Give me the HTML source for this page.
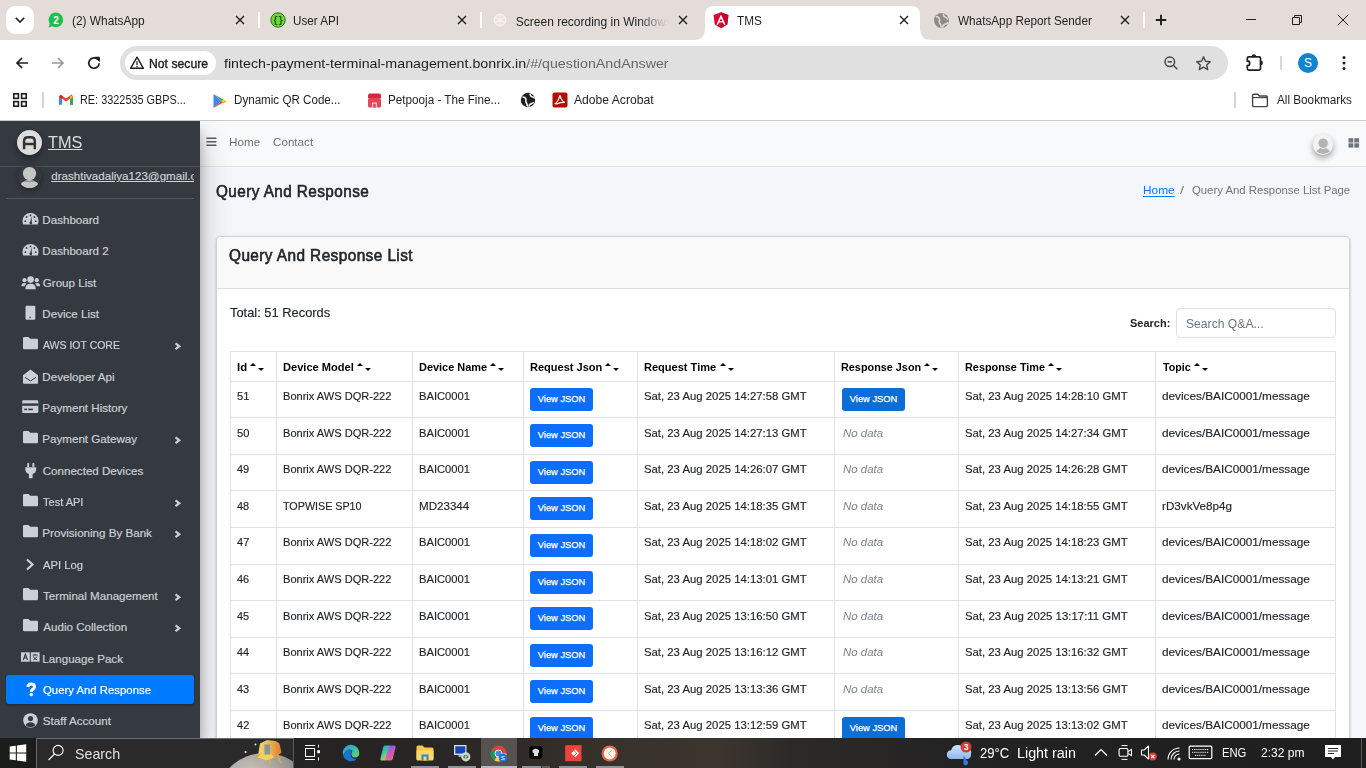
<!DOCTYPE html><html><head><meta charset="utf-8"><title>TMS</title><style>*{box-sizing:border-box;margin:0;padding:0}
html,body{width:1366px;height:768px;overflow:hidden;background:#fff;font-family:"Liberation Sans",sans-serif;position:relative}
.a{position:absolute}
svg.a{overflow:visible}
.t{position:absolute;white-space:nowrap;line-height:1}
.cell{color:#212529;-webkit-text-stroke:.15px #212529}
.th{color:#000;font-weight:bold}
.sort{display:inline-block;position:relative;width:15px;height:10px;margin-left:3.6px}
.sort .up{position:absolute;left:0;top:2.4px;width:0;height:0;border-left:3.3px solid transparent;border-right:3.3px solid transparent;border-bottom:3.2px solid #000}
.sort .dn{position:absolute;left:8px;top:7.4px;width:0;height:0;border-left:3.1px solid transparent;border-right:3.1px solid transparent;border-top:3px solid #000}
.btn{position:absolute;height:23px;width:63px;background:#0d6efd;border-radius:3px;color:#fff;font-size:9.3px;line-height:23px;text-align:center;font-family:"Liberation Sans",sans-serif;-webkit-text-stroke:.25px #fff}
.btn.b2{background:#0b6dd6}
.nod{color:#7d8388;font-style:italic}
.nav{color:#c2c7d0}
</style></head><body>
<div class="a" style="left:0px;top:0px;width:1366px;height:40px;background:#e3dcd9"></div>
<div class="a" style="left:6px;top:6px;width:28px;height:28px;background:#fff;border-radius:9px"></div>
<svg class="a" style="left:0px;top:0px;" width="40" height="40" viewBox="0 0 40 40"><polyline points="15.8,17.8 20,22 24.2,17.8" fill="none" stroke="#1f1f1f" stroke-width="1.6"/></svg>
<svg class="a" style="left:48px;top:12px;" width="16" height="16" viewBox="0 0 16 16"><path d="M8 0.6a7.3 7.3 0 1 1-3.6 13.7L0.6 15.4l1.2-3.6A7.3 7.3 0 0 1 8 0.6z" fill="#1fbf4f"/><text x="8" y="11.6" text-anchor="middle" font-size="10" font-weight="bold" fill="#fff" font-family="Liberation Sans">2</text></svg>
<div class="t " style="left:71.80px;top:15.00px;font-size:12px;transform-origin:0 0;transform:scaleX(0.9905);color:#1f1f1f">(2) WhatsApp</div>
<svg class="a" style="left:232px;top:12px;" width="16" height="16" viewBox="0 0 16 16"><path d="M4 4L12 12M12 4L4 12" stroke="#1f1f1f" stroke-width="1.4"/></svg>
<div class="a" style="left:258px;top:12px;width:2px;height:16px;background:#fff;border-radius:1px"></div>
<svg class="a" style="left:270px;top:12px;" width="16" height="16" viewBox="0 0 16 16"><circle cx="8" cy="8" r="7.2" fill="#6cd73a" stroke="#2f6e18" stroke-width="1"/><text x="8" y="11.4" text-anchor="middle" font-size="8.5" font-weight="bold" fill="#1f4a10" font-family="Liberation Mono">{}</text></svg>
<div class="t " style="left:293.34px;top:15.00px;font-size:12px;transform-origin:0 0;transform:scaleX(0.9697);color:#1f1f1f">User API</div>
<svg class="a" style="left:454px;top:12px;" width="16" height="16" viewBox="0 0 16 16"><path d="M4 4L12 12M12 4L4 12" stroke="#1f1f1f" stroke-width="1.4"/></svg>
<div class="a" style="left:480px;top:12px;width:2px;height:16px;background:#fff;border-radius:1px"></div>
<svg class="a" style="left:492px;top:12px;" width="16" height="16" viewBox="0 0 16 16"><g fill="none" stroke="#f4f1f0" stroke-width="1.6"><circle cx="8" cy="8" r="5.6"/><path d="M8 2.4v6.4M3.2 5.2l5.6 3.2M12.8 5.2l-5.6 3.2M3.2 10.8L8 8M12.8 10.8L8 8M8 13.6V8"/></g></svg>
<div class="t" style="left:515.8px;top:14px;font-size:12px;color:#1f1f1f;width:152px;height:18px;overflow:hidden;-webkit-mask-image:linear-gradient(90deg,#000 80%,transparent 100%)"><div style="line-height:1;padding-top:2px;transform-origin:0 0;transform:scaleX(1.0)">Screen recording in Windows 11</div></div>
<svg class="a" style="left:675px;top:12px;" width="16" height="16" viewBox="0 0 16 16"><path d="M4 4L12 12M12 4L4 12" stroke="#1f1f1f" stroke-width="1.4"/></svg>
<svg class="a" style="left:694px;top:6px" width="244" height="34" viewBox="0 0 244 34"><path d="M0 34 Q10 34 11 24 L11 9 Q11 0 20 0 L217 0 Q226 0 226 9 L226 24 Q227 34 237 34 Z" fill="#fff"/></svg>
<svg class="a" style="left:713px;top:12px;" width="16" height="17" viewBox="0 0 16 17"><path d="M8 0.3L15.4 2.9 14.3 12.6 8 16.3 1.7 12.6 0.6 2.9Z" fill="#dd0031"/><path d="M8 0.3V16.3L14.3 12.6 15.4 2.9Z" fill="#c3002f"/><path d="M8 2.6L3.4 12.8h1.7l0.9-2.3h4l0.9 2.3h1.7ZM8 6.2l1.3 3H6.7Z" fill="#fff"/></svg>
<div class="t " style="left:736.97px;top:15.00px;font-size:12px;transform-origin:0 0;transform:scaleX(0.9771);color:#1f1f1f">TMS</div>
<svg class="a" style="left:896px;top:12px;" width="16" height="16" viewBox="0 0 16 16"><path d="M4 4L12 12M12 4L4 12" stroke="#1f1f1f" stroke-width="1.4"/></svg>
<svg class="a" style="left:933px;top:12px;" width="17" height="17" viewBox="0 0 17 17"><circle cx="8.5" cy="8.5" r="7.5" fill="#8e8b8a"/><path d="M3 4.5c2 0 3 1 3.5 2.5s-1 2.5 0 4 2 2 1.5 4.5M11 1.6c-1 1.5-.5 3 1 3.5s2.5 1 3.2 2.5M9.5 15.8c0-2 1-3 2.5-3.5s2.5-1 3-2" fill="none" stroke="#dcd8d6" stroke-width="1.6"/></svg>
<div class="t " style="left:958.35px;top:15.00px;font-size:12px;transform-origin:0 0;transform:scaleX(0.9788);color:#1f1f1f">WhatsApp Report Sender</div>
<svg class="a" style="left:1117px;top:12px;" width="16" height="16" viewBox="0 0 16 16"><path d="M4 4L12 12M12 4L4 12" stroke="#1f1f1f" stroke-width="1.4"/></svg>
<div class="a" style="left:1143px;top:12px;width:2px;height:16px;background:#fff;border-radius:1px"></div>
<svg class="a" style="left:1153px;top:12px;" width="16" height="16" viewBox="0 0 16 16"><path d="M8 2.8v10.4M2.8 8h10.4" stroke="#1f1f1f" stroke-width="1.9"/></svg>
<div class="a" style="left:1246px;top:19px;width:10px;height:1px;background:#1f1f1f"></div>
<svg class="a" style="left:1290px;top:13px;" width="14" height="14" viewBox="0 0 14 14"><path d="M2.5 4.5h7v7h-7z" fill="none" stroke="#1f1f1f" stroke-width="1"/><path d="M4.5 4.5v-2h7v7h-2" fill="none" stroke="#1f1f1f" stroke-width="1"/></svg>
<svg class="a" style="left:1335px;top:12px;" width="16" height="16" viewBox="0 0 16 16"><path d="M2.8 2.8L13.2 13.2M13.2 2.8L2.8 13.2" stroke="#1f1f1f" stroke-width="1"/></svg>
<div class="a" style="left:0px;top:40px;width:1366px;height:80px;background:#fff;border-radius:8px 8px 0 0"></div>
<svg class="a" style="left:14px;top:55px;" width="16" height="16" viewBox="0 0 16 16"><path d="M14 8H3M8 3L3 8l5 5" fill="none" stroke="#1f1f1f" stroke-width="1.7"/></svg>
<svg class="a" style="left:50px;top:55px;" width="16" height="16" viewBox="0 0 16 16"><path d="M2 8h11M8 3l5 5-5 5" fill="none" stroke="#9a9a9a" stroke-width="1.7"/></svg>
<svg class="a" style="left:86px;top:55px;" width="16" height="16" viewBox="0 0 16 16"><path d="M13.2 8.3A5.2 5.2 0 1 1 11.6 4.3" fill="none" stroke="#1f1f1f" stroke-width="1.7"/><path d="M9.2 2.2h4.2v4.2z" fill="#1f1f1f" stroke="#1f1f1f" stroke-width="1"/></svg>
<div class="a" style="left:120px;top:46px;width:1108px;height:34px;background:#e0e0e0;border-radius:17px"></div>
<div class="a" style="left:125px;top:51px;width:91px;height:24px;background:#fff;border-radius:12px"></div>
<svg class="a" style="left:129px;top:55px;" width="16" height="16" viewBox="0 0 16 16"><path d="M8 2.2L14.4 13.3H1.6Z" fill="none" stroke="#1f1f1f" stroke-width="1.4" stroke-linejoin="round"/><path d="M8 6.3v3.6" stroke="#1f1f1f" stroke-width="1.3"/><circle cx="8" cy="11.5" r=".8" fill="#1f1f1f"/></svg>
<div class="t " style="left:148.70px;top:57.00px;font-size:13px;transform-origin:0 0;transform:scaleX(0.9389);color:#1f1f1f;-webkit-text-stroke:.4px #1f1f1f">Not secure</div>
<div class="t " style="left:224.43px;top:57.00px;font-size:13.6px;transform-origin:0 0;transform:scaleX(1.0470);color:#1f1f1f">fintech-payment-terminal-management.bonrix.in<span style="color:#676767">/#/questionAndAnswer</span></div>
<svg class="a" style="left:1163px;top:55px;" width="16" height="16" viewBox="0 0 16 16"><circle cx="6.8" cy="6.8" r="4.8" fill="none" stroke="#474747" stroke-width="1.5"/><path d="M4.6 6.8h4.4M10.3 10.3l4 4" stroke="#474747" stroke-width="1.5"/></svg>
<svg class="a" style="left:1195px;top:55px;" width="17" height="17" viewBox="0 0 17 17"><path d="M8.5 1.8l2 4.4 4.8.5-3.6 3.2 1 4.7-4.2-2.4-4.2 2.4 1-4.7-3.6-3.2 4.8-.5z" fill="none" stroke="#474747" stroke-width="1.4" stroke-linejoin="round"/></svg>
<svg class="a" style="left:1244px;top:52px;" width="21" height="21" viewBox="0 0 21 21"><path d="M4.8 4.8H15q1.5 0 1.5 1.5v10.3q0 1.5-1.5 1.5H4.8q-1.5 0-1.5-1.5v-2.9a2.4 2.4 0 0 0 0-4.8V6.3q0-1.5 1.5-1.5z" fill="none" stroke="#1f1f1f" stroke-width="1.7"/><path d="M7.6 4.6a2.3 2.3 0 0 1 4.6 0z" fill="#1f1f1f"/><path d="M16.6 8.6a2.3 2.3 0 0 1 0 4.6z" fill="#1f1f1f"/></svg>
<div class="a" style="left:1280px;top:56px;width:1.5px;height:14px;background:#e0d5d3"></div>
<div class="t" style="left:1298px;top:53px;width:20px;height:20px;border-radius:50%;background:#0f85cf;color:#fff;font-size:12px;line-height:20px;text-align:center">S</div>
<svg class="a" style="left:1336px;top:55px;" width="16" height="16" viewBox="0 0 16 16"><circle cx="8" cy="2.6" r="1.5" fill="#1f1f1f"/><circle cx="8" cy="8" r="1.5" fill="#1f1f1f"/><circle cx="8" cy="13.4" r="1.5" fill="#1f1f1f"/></svg>
<svg class="a" style="left:12px;top:92px;" width="16" height="16" viewBox="0 0 16 16"><g fill="none" stroke="#1f1f1f" stroke-width="1.6"><rect x="1.8" y="1.8" width="4.6" height="4.6"/><rect x="9.6" y="1.8" width="4.6" height="4.6"/><rect x="1.8" y="9.6" width="4.6" height="4.6"/><rect x="9.6" y="9.6" width="4.6" height="4.6"/></g></svg>
<div class="a" style="left:42px;top:92px;width:1.5px;height:16px;background:#d6d3d2"></div>
<svg class="a" style="left:58px;top:93px;" width="16" height="13" viewBox="0 0 16 13"><path d="M1 3.5v8.2h3V6.2z" fill="#4285f4"/><path d="M15 3.5v8.2h-3V6.2z" fill="#34a853"/><path d="M1 3.5L8 8.5 15 3.5 13.6 1.6 8 5.6 2.4 1.6z" fill="#ea4335"/><path d="M12 6.2V11.7h3V3.5z" fill="#34a853"/><path d="M15 3.5l-3 2.7V2.2z" fill="#fbbc04"/><path d="M1 3.5l3 2.7V2.2z" fill="#c5221f"/></svg>
<div class="t " style="left:79.51px;top:94.00px;font-size:12px;transform-origin:0 0;transform:scaleX(0.9071);color:#1f1f1f">RE: 3322535 GBPS...</div>
<svg class="a" style="left:212px;top:93px;" width="16" height="16" viewBox="0 0 16 16"><path d="M1.5 1l7.6 7-7.6 7z" fill="#4285f4"/><path d="M1.5 1l10 5.7-2.4 1.3z" fill="#34a853"/><path d="M1.5 15l10-5.7-2.4-1.3z" fill="#ea4335"/><path d="M11.5 6.7L15 8.4l-3.5 2z" fill="#fbbc04"/><path d="M9.1 8l2.4-1.3v3.6z" fill="#fbbc04"/></svg>
<div class="t " style="left:233.55px;top:94.00px;font-size:12px;transform-origin:0 0;transform:scaleX(0.9680);color:#1f1f1f">Dynamic QR Code...</div>
<svg class="a" style="left:366px;top:92px;" width="17" height="17" viewBox="0 0 17 17"><path d="M2 3.5q0-2 2-2h9q2 0 2 2v2.5H2z" fill="#d3263b"/><rect x="2" y="6" width="13" height="9.5" rx="1.5" fill="#e2485a"/><path d="M6 15.5v-5h5v5" fill="#f5c9cf"/><path d="M7.2 15.5v-3.8h2.6v3.8" fill="#e2485a"/></svg>
<div class="t " style="left:387.84px;top:94.00px;font-size:12px;transform-origin:0 0;transform:scaleX(0.9743);color:#1f1f1f">Petpooja - The Fine...</div>
<svg class="a" style="left:520px;top:92px;" width="16" height="16" viewBox="0 0 16 16"><circle cx="8" cy="8" r="7.2" fill="#1f1f1f"/><path d="M2.5 5c2 0 3 .7 3.4 2s-.6 2.3.2 3.5 1.6 1.8 1.2 4M10.5 1.4c-.8 1.4-.2 2.7 1.1 3s2.3.8 2.9 2M9 14.8c0-1.7.9-2.6 2.2-3s2.2-.9 2.7-1.8" fill="none" stroke="#fff" stroke-width="1.5"/></svg>
<svg class="a" style="left:552px;top:92px;" width="16" height="16" viewBox="0 0 16 16"><rect x="0.5" y="0.5" width="15" height="15" rx="2" fill="#b30b00"/><path d="M3.3 11.8c1.2-.8 2.4-2.6 3.4-4.8.6-1.4.8-3.5 1.3-3.5s.5 2 1.1 3.2c.9 1.7 2.4 3.2 3.7 3.7-1.8-.2-4.7.2-6.6 1-1 .4-2.1.8-2.9.4z" fill="none" stroke="#fff" stroke-width="1.2"/></svg>
<div class="t " style="left:574.20px;top:94.00px;font-size:12px;transform-origin:0 0;transform:scaleX(1.0107);color:#1f1f1f">Adobe Acrobat</div>
<div class="a" style="left:1234px;top:92px;width:1.5px;height:16px;background:#d6d3d2"></div>
<svg class="a" style="left:1251px;top:92px;" width="18" height="16" viewBox="0 0 18 16"><path d="M1.6 3.2q0-1 1-1h4.2l1.6 1.8h7q1 0 1 1v8.6q0 1-1 1H2.6q-1 0-1-1z" fill="none" stroke="#474747" stroke-width="1.4"/><path d="M1.6 5.6h14.8" stroke="#474747" stroke-width="1.2"/></svg>
<div class="t " style="left:1276.50px;top:94.00px;font-size:12px;transform-origin:0 0;transform:scaleX(0.9768);color:#1f1f1f">All Bookmarks</div>
<div class="a" style="left:0px;top:120px;width:1366px;height:1px;background:#c9c9c9"></div>
<div class="a" style="left:0px;top:121px;width:1366px;height:617px;background:#f4f6f9"></div>
<div class="a" style="left:200px;top:121px;width:1166px;height:45px;background:#f8f9fa"></div>
<div class="a" style="left:200px;top:166px;width:1166px;height:1px;background:#dee2e6"></div>
<div class="a" style="left:0px;top:121px;width:200px;height:617px;background:#343a40;box-shadow:0 14px 28px rgba(0,0,0,.25),0 10px 10px rgba(0,0,0,.22);clip-path:inset(0 -60px -60px 0)"></div>
<div class="a" style="left:17px;top:129.5px;width:25px;height:25px;border-radius:50%;background:#dcdcdc;box-shadow:0 3px 6px rgba(0,0,0,.16),0 3px 6px rgba(0,0,0,.23)"></div>
<svg class="a" style="left:17px;top:129.5px;" width="25" height="25" viewBox="0 0 25 25"><path d="M7.1 19.2V11.2q0-3.9 3.9-3.9h2.9q3.9 0 3.9 3.9v8M7.1 13.9h10.7" fill="none" stroke="#333" stroke-width="2.5"/></svg>
<div class="t " style="left:48.38px;top:134.00px;font-size:16.5px;transform-origin:0 0;transform:scaleX(0.9860);color:rgba(255,255,255,.82);text-decoration:underline;text-decoration-thickness:1px;text-underline-offset:1px">TMS</div>
<div class="a" style="left:0px;top:166px;width:200px;height:1px;background:#4b545c"></div>
<svg class="a" style="left:18px;top:164px;filter:drop-shadow(0 2px 3px rgba(0,0,0,.4))" width="23" height="25" viewBox="0 0 23 25"><defs><clipPath id="uc"><circle cx="11.5" cy="12.5" r="11.5"/></clipPath></defs><circle cx="11.5" cy="12.5" r="11.5" fill="#343a40"/><g clip-path="url(#uc)"><circle cx="11.5" cy="9.5" r="6.6" fill="#c6c6c6"/><ellipse cx="11.5" cy="24.5" rx="10.5" ry="8.5" fill="#c6c6c6"/><path d="M3 16.3q8.5 3 17 0" stroke="#343a40" stroke-width=".8" fill="none" opacity=".5"/></g></svg>
<div class="t" style="left:51.2px;top:169.3px;width:142.5px;height:16px;overflow:hidden;font-size:11.6px;line-height:14px;color:#d0d4da;-webkit-text-stroke:.15px #d0d4da;text-decoration:underline;text-underline-offset:1px">drashtivadaliya123@gmail.com</div>
<div class="a" style="left:6px;top:198px;width:188px;height:1px;background:#4f5962"></div>
<div class="a" style="left:6px;top:675px;width:188px;height:29px;background:#007bff;border-radius:3px;box-shadow:0 1px 3px rgba(0,0,0,.12),0 1px 2px rgba(0,0,0,.24)"></div>
<svg class="a" style="left:21.5px;top:212.0px;" width="17" height="13" viewBox="0 0 17 13"><path d="M8.5 1A8 8 0 0 0 .5 9q0 1.8.8 3.4h14.4q.8-1.6.8-3.4A8 8 0 0 0 8.5 1z" fill="#cbd0d7"/><g fill="#343a40"><circle cx="3.3" cy="9.2" r=".9"/><circle cx="4.6" cy="5" r=".9"/><circle cx="13.7" cy="9.2" r=".9"/><circle cx="12.4" cy="5" r=".9"/><circle cx="8.5" cy="3.4" r=".9"/><path d="M9.6 4.2L8.3 9.6a1.4 1.4 0 1 0 1.5.3z"/></g></svg>
<div class="t " style="left:42.35px;top:214.00px;font-size:11.6px;transform-origin:0 0;transform:scaleX(1.0000);color:#cbd0d7;-webkit-text-stroke:.2px #cbd0d7">Dashboard</div>
<svg class="a" style="left:21.5px;top:243.0px;" width="17" height="13" viewBox="0 0 17 13"><path d="M8.5 1A8 8 0 0 0 .5 9q0 1.8.8 3.4h14.4q.8-1.6.8-3.4A8 8 0 0 0 8.5 1z" fill="#cbd0d7"/><g fill="#343a40"><circle cx="3.3" cy="9.2" r=".9"/><circle cx="4.6" cy="5" r=".9"/><circle cx="13.7" cy="9.2" r=".9"/><circle cx="12.4" cy="5" r=".9"/><circle cx="8.5" cy="3.4" r=".9"/><path d="M9.6 4.2L8.3 9.6a1.4 1.4 0 1 0 1.5.3z"/></g></svg>
<div class="t " style="left:42.35px;top:245.00px;font-size:11.6px;transform-origin:0 0;transform:scaleX(1.0000);color:#cbd0d7;-webkit-text-stroke:.2px #cbd0d7">Dashboard 2</div>
<svg class="a" style="left:20.5px;top:275.5px;" width="19.5" height="13.5" viewBox="0 0 19.5 13.5"><g fill="#cbd0d7"><circle cx="9.6" cy="3.6" r="3.3"/><path d="M4.4 13.2q0-5.4 5.2-5.4t5.2 5.4z"/><circle cx="3.5" cy="4.2" r="2.1"/><circle cx="15.8" cy="4.2" r="2.1"/><path d="M.4 10.3q0-3.3 3.1-3.3 1.2 0 2 .5-1.5 1.1-1.9 2.8z"/><path d="M19.1 10.3q0-3.3-3.1-3.3-1.2 0-2 .5 1.5 1.1 1.9 2.8z"/></g></svg>
<div class="t " style="left:42.76px;top:277.00px;font-size:11.6px;transform-origin:0 0;transform:scaleX(1.0000);color:#cbd0d7;-webkit-text-stroke:.2px #cbd0d7">Group List</div>
<svg class="a" style="left:24.5px;top:305.0px;" width="11" height="15" viewBox="0 0 11 15"><rect x=".5" y=".7" width="9.8" height="14.1" rx="1.3" fill="#cbd0d7"/><rect x="4.3" y="11.6" width="1.6" height="1.6" fill="#5a6068"/></svg>
<div class="t " style="left:42.35px;top:308.00px;font-size:11.6px;transform-origin:0 0;transform:scaleX(1.0000);color:#cbd0d7;-webkit-text-stroke:.2px #cbd0d7">Device List</div>
<svg class="a" style="left:22.5px;top:337.0px;" width="15" height="12" viewBox="0 0 15 12"><path d="M0 1.2Q0 0 1.2 0h4.3l1.7 1.8h6.6q1.2 0 1.2 1.2v8q0 1.2-1.2 1.2H1.2Q0 12.2 0 11z" fill="#cbd0d7"/></svg>
<div class="t " style="left:43.30px;top:339.00px;font-size:11.6px;transform-origin:0 0;transform:scaleX(0.9050);color:#cbd0d7;-webkit-text-stroke:.2px #cbd0d7">AWS IOT CORE</div>
<svg class="a" style="left:172px;top:339.7px;" width="10" height="12" viewBox="0 0 10 12"><path d="M3.5 3.3L7.3 6.2 3.5 9.1" fill="none" stroke="#cbd0d7" stroke-width="2.2"/></svg>
<svg class="a" style="left:22.5px;top:368.5px;" width="15" height="15" viewBox="0 0 15 15"><path d="M0 6.2L7.5.5 15 6.2V14q0 .8-.8.8H.8Q0 14.8 0 14z" fill="#cbd0d7"/><path d="M2 8.3l5.5 3.7 5.5-3.7" fill="none" stroke="#343a40" stroke-width="1"/></svg>
<div class="t " style="left:42.35px;top:371.00px;font-size:11.6px;transform-origin:0 0;transform:scaleX(1.0000);color:#cbd0d7;-webkit-text-stroke:.2px #cbd0d7">Developer Api</div>
<svg class="a" style="left:21.7px;top:400.0px;" width="16.5" height="13" viewBox="0 0 16.5 13"><rect x=".2" y=".2" width="16.1" height="12.8" rx="1.2" fill="#cbd0d7"/><rect x=".2" y="3.4" width="16.1" height="2.4" fill="#343a40"/><rect x="2.2" y="8.6" width="3" height="1.6" fill="#343a40"/><rect x="6.3" y="8.6" width="4.6" height="1.6" fill="#343a40"/></svg>
<div class="t " style="left:42.35px;top:402.00px;font-size:11.6px;transform-origin:0 0;transform:scaleX(1.0000);color:#cbd0d7;-webkit-text-stroke:.2px #cbd0d7">Payment History</div>
<svg class="a" style="left:22.5px;top:431.0px;" width="15" height="12" viewBox="0 0 15 12"><path d="M0 1.2Q0 0 1.2 0h4.3l1.7 1.8h6.6q1.2 0 1.2 1.2v8q0 1.2-1.2 1.2H1.2Q0 12.2 0 11z" fill="#cbd0d7"/></svg>
<div class="t " style="left:42.35px;top:433.00px;font-size:11.6px;transform-origin:0 0;transform:scaleX(1.0000);color:#cbd0d7;-webkit-text-stroke:.2px #cbd0d7">Payment Gateway</div>
<svg class="a" style="left:172px;top:433.7px;" width="10" height="12" viewBox="0 0 10 12"><path d="M3.5 3.3L7.3 6.2 3.5 9.1" fill="none" stroke="#cbd0d7" stroke-width="2.2"/></svg>
<svg class="a" style="left:24.5px;top:462.5px;" width="11.5" height="15.5" viewBox="0 0 11.5 15.5"><g fill="#cbd0d7"><rect x="2.2" y="0" width="1.9" height="4.2" rx=".6"/><rect x="7.4" y="0" width="1.9" height="4.2" rx=".6"/><path d="M.3 4.2h10.9v1.5q0 4.2-3.6 5.3v4.3H3.9V11Q.3 9.9.3 5.7z"/></g></svg>
<div class="t " style="left:42.71px;top:465.00px;font-size:11.6px;transform-origin:0 0;transform:scaleX(1.0000);color:#cbd0d7;-webkit-text-stroke:.2px #cbd0d7">Connected Devices</div>
<svg class="a" style="left:22.5px;top:494.0px;" width="15" height="12" viewBox="0 0 15 12"><path d="M0 1.2Q0 0 1.2 0h4.3l1.7 1.8h6.6q1.2 0 1.2 1.2v8q0 1.2-1.2 1.2H1.2Q0 12.2 0 11z" fill="#cbd0d7"/></svg>
<div class="t " style="left:43.08px;top:496.00px;font-size:11.6px;transform-origin:0 0;transform:scaleX(0.9500);color:#cbd0d7;-webkit-text-stroke:.2px #cbd0d7">Test API</div>
<svg class="a" style="left:172px;top:496.7px;" width="10" height="12" viewBox="0 0 10 12"><path d="M3.5 3.3L7.3 6.2 3.5 9.1" fill="none" stroke="#cbd0d7" stroke-width="2.2"/></svg>
<svg class="a" style="left:22.5px;top:525.0px;" width="15" height="12" viewBox="0 0 15 12"><path d="M0 1.2Q0 0 1.2 0h4.3l1.7 1.8h6.6q1.2 0 1.2 1.2v8q0 1.2-1.2 1.2H1.2Q0 12.2 0 11z" fill="#cbd0d7"/></svg>
<div class="t " style="left:42.35px;top:527.00px;font-size:11.6px;transform-origin:0 0;transform:scaleX(1.0000);color:#cbd0d7;-webkit-text-stroke:.2px #cbd0d7">Provisioning By Bank</div>
<svg class="a" style="left:172px;top:527.7px;" width="10" height="12" viewBox="0 0 10 12"><path d="M3.5 3.3L7.3 6.2 3.5 9.1" fill="none" stroke="#cbd0d7" stroke-width="2.2"/></svg>
<svg class="a" style="left:24.5px;top:558.0px;" width="10" height="13" viewBox="0 0 10 13"><path d="M2 1.5L7.5 6.5 2 11.5" fill="none" stroke="#cbd0d7" stroke-width="2.2"/></svg>
<div class="t " style="left:43.30px;top:559.00px;font-size:11.6px;transform-origin:0 0;transform:scaleX(0.9700);color:#cbd0d7;-webkit-text-stroke:.2px #cbd0d7">API Log</div>
<svg class="a" style="left:22.5px;top:588.0px;" width="15" height="12" viewBox="0 0 15 12"><path d="M0 1.2Q0 0 1.2 0h4.3l1.7 1.8h6.6q1.2 0 1.2 1.2v8q0 1.2-1.2 1.2H1.2Q0 12.2 0 11z" fill="#cbd0d7"/></svg>
<div class="t " style="left:43.07px;top:590.00px;font-size:11.6px;transform-origin:0 0;transform:scaleX(1.0000);color:#cbd0d7;-webkit-text-stroke:.2px #cbd0d7">Terminal Management</div>
<svg class="a" style="left:172px;top:590.7px;" width="10" height="12" viewBox="0 0 10 12"><path d="M3.5 3.3L7.3 6.2 3.5 9.1" fill="none" stroke="#cbd0d7" stroke-width="2.2"/></svg>
<svg class="a" style="left:22.5px;top:619.0px;" width="15" height="12" viewBox="0 0 15 12"><path d="M0 1.2Q0 0 1.2 0h4.3l1.7 1.8h6.6q1.2 0 1.2 1.2v8q0 1.2-1.2 1.2H1.2Q0 12.2 0 11z" fill="#cbd0d7"/></svg>
<div class="t " style="left:43.30px;top:621.00px;font-size:11.6px;transform-origin:0 0;transform:scaleX(1.0000);color:#cbd0d7;-webkit-text-stroke:.2px #cbd0d7">Audio Collection</div>
<svg class="a" style="left:172px;top:621.7px;" width="10" height="12" viewBox="0 0 10 12"><path d="M3.5 3.3L7.3 6.2 3.5 9.1" fill="none" stroke="#cbd0d7" stroke-width="2.2"/></svg>
<svg class="a" style="left:20.7px;top:652.0px;" width="19" height="10" viewBox="0 0 19 10"><rect x="0" y=".3" width="8.8" height="9.4" fill="#cbd0d7"/><rect x="9.8" y=".3" width="8.8" height="9.4" fill="#cbd0d7"/><path d="M2.3 8L4.4 2.2 6.5 8M3.1 6h2.6" fill="none" stroke="#343a40" stroke-width="1.1"/><path d="M11.6 3h5M14.1 2v1.2M12.3 4.4q1.3 3 3.8 3.4M15.9 4.4q-1.2 2.6-3.6 3.4" fill="none" stroke="#343a40" stroke-width="1"/></svg>
<div class="t " style="left:42.35px;top:653.00px;font-size:11.6px;transform-origin:0 0;transform:scaleX(1.0000);color:#cbd0d7;-webkit-text-stroke:.2px #cbd0d7">Language Pack</div>
<svg class="a" style="left:24.5px;top:682.0px;" width="12" height="16" viewBox="0 0 12 16"><path d="M3 5Q3 1.9 6.2 1.9t3.3 2.9q0 1.7-1.8 2.6-1.4.7-1.4 2v.7" fill="none" stroke="#fff" stroke-width="3"/><circle cx="6.3" cy="12.6" r="1.75" fill="#fff"/></svg>
<div class="t " style="left:42.77px;top:684.00px;font-size:11.6px;transform-origin:0 0;transform:scaleX(0.9800);color:#fff;-webkit-text-stroke:.2px #fff">Query And Response</div>
<svg class="a" style="left:22.5px;top:712.5px;" width="15" height="15" viewBox="0 0 15 15"><circle cx="7.5" cy="7.5" r="7.3" fill="#cbd0d7"/><circle cx="7.5" cy="5.6" r="2.6" fill="#343a40"/><path d="M2.6 12.2q1.4-3 4.9-3t4.9 3q-2 2-4.9 2t-4.9-2z" fill="#343a40"/></svg>
<div class="t " style="left:42.80px;top:715.00px;font-size:11.6px;transform-origin:0 0;transform:scaleX(1.0000);color:#cbd0d7;-webkit-text-stroke:.2px #cbd0d7">Staff Account</div>
<svg class="a" style="left:205px;top:136px;" width="13" height="12" viewBox="0 0 13 12"><path d="M1.9 2.3h9M1.9 5.8h9M1.9 9.3h9" stroke="#55595e" stroke-width="1.4" stroke-linecap="round"/></svg>
<div class="t " style="left:228.74px;top:137.00px;font-size:10.8px;transform-origin:0 0;transform:scaleX(1.0851);color:#6c7177">Home</div>
<div class="t " style="left:272.91px;top:137.00px;font-size:10.8px;transform-origin:0 0;transform:scaleX(1.0787);color:#6c7177">Contact</div>
<div class="a" style="left:1313px;top:134.3px;width:20.4px;height:20.4px;border-radius:50%;background:#f2f2f2;box-shadow:0 3px 6px rgba(0,0,0,.16),0 3px 6px rgba(0,0,0,.23)"></div>
<svg class="a" style="left:1313px;top:134px;" width="20" height="21" viewBox="0 0 20 21"><defs><clipPath id="uc2"><circle cx="10.2" cy="10.5" r="9.4"/></clipPath></defs><g clip-path="url(#uc2)"><ellipse cx="10.2" cy="20.8" rx="7.6" ry="7.2" fill="#b3b3b3"/><circle cx="10.2" cy="9.2" r="5.2" fill="#b3b3b3" stroke="#f2f2f2" stroke-width="1"/></g></svg>
<svg class="a" style="left:1348px;top:138px;" width="12" height="10" viewBox="0 0 12 10"><g fill="#6c757d"><rect x=".5" y=".2" width="4.8" height="4.3"/><rect x="6.3" y=".2" width="4.8" height="4.3"/><rect x=".5" y="5.3" width="4.8" height="4.3"/><rect x="6.3" y="5.3" width="4.8" height="4.3"/></g></svg>
<div class="t " style="left:215.68px;top:183.00px;font-size:16.3px;transform-origin:0 0;transform:scaleX(0.9404);color:#212529;-webkit-text-stroke:.6px #212529;letter-spacing:0.45px">Query And Response</div>
<div class="t " style="left:1142.53px;top:185.00px;font-size:11.3px;transform-origin:0 0;transform:scaleX(1.0510);color:#007bff;text-decoration:underline;text-underline-offset:1.5px">Home</div>
<div class="t " style="left:1179.80px;top:185.00px;font-size:11.3px;transform-origin:0 0;transform:scaleX(1.2586);color:#6c757d">/</div>
<div class="t " style="left:1191.67px;top:185.00px;font-size:11.3px;transform-origin:0 0;transform:scaleX(1.0035);color:#6c757d">Query And Response List Page</div>
<div class="a" style="left:216px;top:236px;width:1134px;height:540px;background:#fff;border:1px solid #d2d2d2;border-radius:5px;box-shadow:0 0 1px rgba(0,0,0,.125),0 1px 3px rgba(0,0,0,.2)"></div>
<div class="a" style="left:217px;top:237px;width:1132px;height:51px;background:#f9f9f9;border-radius:4px 4px 0 0"></div>
<div class="a" style="left:217px;top:288px;width:1132px;height:1px;background:#dcdcdc"></div>
<div class="t " style="left:229.28px;top:247.00px;font-size:16.3px;transform-origin:0 0;transform:scaleX(0.9437);color:#212529;-webkit-text-stroke:.6px #212529;letter-spacing:0.45px">Query And Response List</div>
<div class="t " style="left:230.35px;top:306.00px;font-size:13.2px;transform-origin:0 0;transform:scaleX(0.9766);color:#212529;-webkit-text-stroke:.15px #212529">Total: 51 Records</div>
<div class="t " style="left:1129.70px;top:318.00px;font-size:11.2px;transform-origin:0 0;transform:scaleX(0.9817);color:#212529;font-weight:bold">Search:</div>
<div class="a" style="left:1176px;top:308px;width:160px;height:30px;background:#fff;border:1px solid #dee2e6;border-radius:4px"></div>
<div class="t " style="left:1186.48px;top:318.00px;font-size:12.8px;transform-origin:0 0;transform:scaleX(0.9488);color:#6c757d">Search Q&amp;A...</div>
<div class="a" style="left:230px;top:351px;width:1106px;height:1px;background:#dee2e6"></div>
<div class="a" style="left:230px;top:381px;width:1106px;height:1px;background:#dee2e6"></div>
<div class="a" style="left:230px;top:417px;width:1106px;height:1px;background:#dee2e6"></div>
<div class="a" style="left:230px;top:454px;width:1106px;height:1px;background:#dee2e6"></div>
<div class="a" style="left:230px;top:490px;width:1106px;height:1px;background:#dee2e6"></div>
<div class="a" style="left:230px;top:527px;width:1106px;height:1px;background:#dee2e6"></div>
<div class="a" style="left:230px;top:564px;width:1106px;height:1px;background:#dee2e6"></div>
<div class="a" style="left:230px;top:600px;width:1106px;height:1px;background:#dee2e6"></div>
<div class="a" style="left:230px;top:637px;width:1106px;height:1px;background:#dee2e6"></div>
<div class="a" style="left:230px;top:673px;width:1106px;height:1px;background:#dee2e6"></div>
<div class="a" style="left:230px;top:710px;width:1106px;height:1px;background:#dee2e6"></div>
<div class="a" style="left:230px;top:351px;width:1px;height:387px;background:#dee2e6"></div>
<div class="a" style="left:276px;top:351px;width:1px;height:387px;background:#dee2e6"></div>
<div class="a" style="left:412px;top:351px;width:1px;height:387px;background:#dee2e6"></div>
<div class="a" style="left:523px;top:351px;width:1px;height:387px;background:#dee2e6"></div>
<div class="a" style="left:637px;top:351px;width:1px;height:387px;background:#dee2e6"></div>
<div class="a" style="left:834px;top:351px;width:1px;height:387px;background:#dee2e6"></div>
<div class="a" style="left:958px;top:351px;width:1px;height:387px;background:#dee2e6"></div>
<div class="a" style="left:1155px;top:351px;width:1px;height:387px;background:#dee2e6"></div>
<div class="a" style="left:1335px;top:351px;width:1px;height:387px;background:#dee2e6"></div>
<div class="t " style="left:236.85px;top:362.00px;font-size:11.8px;transform-origin:0 0;transform:scaleX(0.9617);color:#000;font-weight:bold">Id</div>
<div class="a" style="left:250.00px;top:363px;width:0;height:0;border-left:3.3px solid transparent;border-right:3.3px solid transparent;border-bottom:3.2px solid #000"></div>
<div class="a" style="left:258.00px;top:368px;width:0;height:0;border-left:3.1px solid transparent;border-right:3.1px solid transparent;border-top:3px solid #000"></div>
<div class="t " style="left:282.86px;top:362.00px;font-size:11.8px;transform-origin:0 0;transform:scaleX(0.9391);color:#000;font-weight:bold">Device Model</div>
<div class="a" style="left:356.70px;top:363px;width:0;height:0;border-left:3.3px solid transparent;border-right:3.3px solid transparent;border-bottom:3.2px solid #000"></div>
<div class="a" style="left:364.70px;top:368px;width:0;height:0;border-left:3.1px solid transparent;border-right:3.1px solid transparent;border-top:3px solid #000"></div>
<div class="t " style="left:418.87px;top:362.00px;font-size:11.8px;transform-origin:0 0;transform:scaleX(0.9264);color:#000;font-weight:bold">Device Name</div>
<div class="a" style="left:490.40px;top:363px;width:0;height:0;border-left:3.3px solid transparent;border-right:3.3px solid transparent;border-bottom:3.2px solid #000"></div>
<div class="a" style="left:498.40px;top:368px;width:0;height:0;border-left:3.1px solid transparent;border-right:3.1px solid transparent;border-top:3px solid #000"></div>
<div class="t " style="left:529.87px;top:362.00px;font-size:11.8px;transform-origin:0 0;transform:scaleX(0.9345);color:#000;font-weight:bold">Request Json</div>
<div class="a" style="left:605.30px;top:363px;width:0;height:0;border-left:3.3px solid transparent;border-right:3.3px solid transparent;border-bottom:3.2px solid #000"></div>
<div class="a" style="left:613.30px;top:368px;width:0;height:0;border-left:3.1px solid transparent;border-right:3.1px solid transparent;border-top:3px solid #000"></div>
<div class="t " style="left:643.87px;top:362.00px;font-size:11.8px;transform-origin:0 0;transform:scaleX(0.9354);color:#000;font-weight:bold">Request Time</div>
<div class="a" style="left:719.50px;top:363px;width:0;height:0;border-left:3.3px solid transparent;border-right:3.3px solid transparent;border-bottom:3.2px solid #000"></div>
<div class="a" style="left:727.50px;top:368px;width:0;height:0;border-left:3.1px solid transparent;border-right:3.1px solid transparent;border-top:3px solid #000"></div>
<div class="t " style="left:840.88px;top:362.00px;font-size:11.8px;transform-origin:0 0;transform:scaleX(0.9191);color:#000;font-weight:bold">Response Json</div>
<div class="a" style="left:924.20px;top:363px;width:0;height:0;border-left:3.3px solid transparent;border-right:3.3px solid transparent;border-bottom:3.2px solid #000"></div>
<div class="a" style="left:932.20px;top:368px;width:0;height:0;border-left:3.1px solid transparent;border-right:3.1px solid transparent;border-top:3px solid #000"></div>
<div class="t " style="left:964.88px;top:362.00px;font-size:11.8px;transform-origin:0 0;transform:scaleX(0.9205);color:#000;font-weight:bold">Response Time</div>
<div class="a" style="left:1048.40px;top:363px;width:0;height:0;border-left:3.3px solid transparent;border-right:3.3px solid transparent;border-bottom:3.2px solid #000"></div>
<div class="a" style="left:1056.40px;top:368px;width:0;height:0;border-left:3.1px solid transparent;border-right:3.1px solid transparent;border-top:3px solid #000"></div>
<div class="t " style="left:1162.52px;top:362.00px;font-size:11.8px;transform-origin:0 0;transform:scaleX(0.9056);color:#000;font-weight:bold">Topic</div>
<div class="a" style="left:1193.70px;top:363px;width:0;height:0;border-left:3.3px solid transparent;border-right:3.3px solid transparent;border-bottom:3.2px solid #000"></div>
<div class="a" style="left:1201.70px;top:368px;width:0;height:0;border-left:3.1px solid transparent;border-right:3.1px solid transparent;border-top:3px solid #000"></div>
<div class="t cell" style="left:237.16px;top:390.00px;font-size:11.6px;transform-origin:0 0;transform:scaleX(0.9687);">51</div>
<div class="t cell" style="left:282.69px;top:390.00px;font-size:11.6px;transform-origin:0 0;transform:scaleX(0.9541);">Bonrix AWS DQR-222</div>
<div class="t cell" style="left:418.68px;top:390.00px;font-size:11.6px;transform-origin:0 0;transform:scaleX(0.9653);">BAIC0001</div>
<div class="btn" style="left:530px;top:388px">View JSON</div>
<div class="t cell" style="left:644.01px;top:390.00px;font-size:11.6px;transform-origin:0 0;transform:scaleX(0.9779);">Sat, 23 Aug 2025 14:27:58 GMT</div>
<div class="btn b2" style="left:842px;top:388px">View JSON</div>
<div class="t cell" style="left:965.01px;top:390.00px;font-size:11.6px;transform-origin:0 0;transform:scaleX(0.9779);">Sat, 23 Aug 2025 14:28:10 GMT</div>
<div class="t cell" style="left:1162.14px;top:390.00px;font-size:11.6px;transform-origin:0 0;transform:scaleX(1.0154);">devices/BAIC0001/message</div>
<div class="t cell" style="left:237.17px;top:427.00px;font-size:11.6px;transform-origin:0 0;transform:scaleX(0.9577);">50</div>
<div class="t cell" style="left:282.69px;top:427.00px;font-size:11.6px;transform-origin:0 0;transform:scaleX(0.9541);">Bonrix AWS DQR-222</div>
<div class="t cell" style="left:418.68px;top:427.00px;font-size:11.6px;transform-origin:0 0;transform:scaleX(0.9653);">BAIC0001</div>
<div class="btn" style="left:530px;top:424px">View JSON</div>
<div class="t cell" style="left:644.01px;top:427.00px;font-size:11.6px;transform-origin:0 0;transform:scaleX(0.9779);">Sat, 23 Aug 2025 14:27:13 GMT</div>
<div class="t nod" style="left:842.59px;top:427.00px;font-size:11.6px;transform-origin:0 0;transform:scaleX(0.9870);;font-style:italic">No data</div>
<div class="t cell" style="left:965.01px;top:427.00px;font-size:11.6px;transform-origin:0 0;transform:scaleX(0.9779);">Sat, 23 Aug 2025 14:27:34 GMT</div>
<div class="t cell" style="left:1162.14px;top:427.00px;font-size:11.6px;transform-origin:0 0;transform:scaleX(1.0154);">devices/BAIC0001/message</div>
<div class="t cell" style="left:237.39px;top:463.00px;font-size:11.6px;transform-origin:0 0;transform:scaleX(0.9470);">49</div>
<div class="t cell" style="left:282.69px;top:463.00px;font-size:11.6px;transform-origin:0 0;transform:scaleX(0.9541);">Bonrix AWS DQR-222</div>
<div class="t cell" style="left:418.68px;top:463.00px;font-size:11.6px;transform-origin:0 0;transform:scaleX(0.9653);">BAIC0001</div>
<div class="btn" style="left:530px;top:461px">View JSON</div>
<div class="t cell" style="left:644.01px;top:463.00px;font-size:11.6px;transform-origin:0 0;transform:scaleX(0.9779);">Sat, 23 Aug 2025 14:26:07 GMT</div>
<div class="t nod" style="left:842.59px;top:463.00px;font-size:11.6px;transform-origin:0 0;transform:scaleX(0.9870);;font-style:italic">No data</div>
<div class="t cell" style="left:965.01px;top:463.00px;font-size:11.6px;transform-origin:0 0;transform:scaleX(0.9779);">Sat, 23 Aug 2025 14:26:28 GMT</div>
<div class="t cell" style="left:1162.14px;top:463.00px;font-size:11.6px;transform-origin:0 0;transform:scaleX(1.0154);">devices/BAIC0001/message</div>
<div class="t cell" style="left:237.39px;top:500.00px;font-size:11.6px;transform-origin:0 0;transform:scaleX(0.9435);">48</div>
<div class="t cell" style="left:283.39px;top:500.00px;font-size:11.6px;transform-origin:0 0;transform:scaleX(0.9260);">TOPWISE SP10</div>
<div class="t cell" style="left:418.65px;top:500.00px;font-size:11.6px;transform-origin:0 0;transform:scaleX(0.9994);">MD23344</div>
<div class="btn" style="left:530px;top:497px">View JSON</div>
<div class="t cell" style="left:644.01px;top:500.00px;font-size:11.6px;transform-origin:0 0;transform:scaleX(0.9779);">Sat, 23 Aug 2025 14:18:35 GMT</div>
<div class="t nod" style="left:842.59px;top:500.00px;font-size:11.6px;transform-origin:0 0;transform:scaleX(0.9870);;font-style:italic">No data</div>
<div class="t cell" style="left:965.01px;top:500.00px;font-size:11.6px;transform-origin:0 0;transform:scaleX(0.9779);">Sat, 23 Aug 2025 14:18:55 GMT</div>
<div class="t cell" style="left:1161.82px;top:500.00px;font-size:11.6px;transform-origin:0 0;transform:scaleX(1.0066);">rD3vkVe8p4g</div>
<div class="t cell" style="left:237.38px;top:536.00px;font-size:11.6px;transform-origin:0 0;transform:scaleX(0.9505);">47</div>
<div class="t cell" style="left:282.69px;top:536.00px;font-size:11.6px;transform-origin:0 0;transform:scaleX(0.9541);">Bonrix AWS DQR-222</div>
<div class="t cell" style="left:418.68px;top:536.00px;font-size:11.6px;transform-origin:0 0;transform:scaleX(0.9653);">BAIC0001</div>
<div class="btn" style="left:530px;top:534px">View JSON</div>
<div class="t cell" style="left:644.01px;top:536.00px;font-size:11.6px;transform-origin:0 0;transform:scaleX(0.9779);">Sat, 23 Aug 2025 14:18:02 GMT</div>
<div class="t nod" style="left:842.59px;top:536.00px;font-size:11.6px;transform-origin:0 0;transform:scaleX(0.9870);;font-style:italic">No data</div>
<div class="t cell" style="left:965.01px;top:536.00px;font-size:11.6px;transform-origin:0 0;transform:scaleX(0.9779);">Sat, 23 Aug 2025 14:18:23 GMT</div>
<div class="t cell" style="left:1162.14px;top:536.00px;font-size:11.6px;transform-origin:0 0;transform:scaleX(1.0154);">devices/BAIC0001/message</div>
<div class="t cell" style="left:237.39px;top:573.00px;font-size:11.6px;transform-origin:0 0;transform:scaleX(0.9435);">46</div>
<div class="t cell" style="left:282.69px;top:573.00px;font-size:11.6px;transform-origin:0 0;transform:scaleX(0.9541);">Bonrix AWS DQR-222</div>
<div class="t cell" style="left:418.68px;top:573.00px;font-size:11.6px;transform-origin:0 0;transform:scaleX(0.9653);">BAIC0001</div>
<div class="btn" style="left:530px;top:571px">View JSON</div>
<div class="t cell" style="left:644.01px;top:573.00px;font-size:11.6px;transform-origin:0 0;transform:scaleX(0.9779);">Sat, 23 Aug 2025 14:13:01 GMT</div>
<div class="t nod" style="left:842.59px;top:573.00px;font-size:11.6px;transform-origin:0 0;transform:scaleX(0.9870);;font-style:italic">No data</div>
<div class="t cell" style="left:965.01px;top:573.00px;font-size:11.6px;transform-origin:0 0;transform:scaleX(0.9779);">Sat, 23 Aug 2025 14:13:21 GMT</div>
<div class="t cell" style="left:1162.14px;top:573.00px;font-size:11.6px;transform-origin:0 0;transform:scaleX(1.0154);">devices/BAIC0001/message</div>
<div class="t cell" style="left:237.39px;top:610.00px;font-size:11.6px;transform-origin:0 0;transform:scaleX(0.9435);">45</div>
<div class="t cell" style="left:282.69px;top:610.00px;font-size:11.6px;transform-origin:0 0;transform:scaleX(0.9541);">Bonrix AWS DQR-222</div>
<div class="t cell" style="left:418.68px;top:610.00px;font-size:11.6px;transform-origin:0 0;transform:scaleX(0.9653);">BAIC0001</div>
<div class="btn" style="left:530px;top:607px">View JSON</div>
<div class="t cell" style="left:644.01px;top:610.00px;font-size:11.6px;transform-origin:0 0;transform:scaleX(0.9779);">Sat, 23 Aug 2025 13:16:50 GMT</div>
<div class="t nod" style="left:842.59px;top:610.00px;font-size:11.6px;transform-origin:0 0;transform:scaleX(0.9870);;font-style:italic">No data</div>
<div class="t cell" style="left:965.01px;top:610.00px;font-size:11.6px;transform-origin:0 0;transform:scaleX(0.9830);">Sat, 23 Aug 2025 13:17:11 GMT</div>
<div class="t cell" style="left:1162.14px;top:610.00px;font-size:11.6px;transform-origin:0 0;transform:scaleX(1.0154);">devices/BAIC0001/message</div>
<div class="t cell" style="left:237.39px;top:646.00px;font-size:11.6px;transform-origin:0 0;transform:scaleX(0.9331);">44</div>
<div class="t cell" style="left:282.69px;top:646.00px;font-size:11.6px;transform-origin:0 0;transform:scaleX(0.9541);">Bonrix AWS DQR-222</div>
<div class="t cell" style="left:418.68px;top:646.00px;font-size:11.6px;transform-origin:0 0;transform:scaleX(0.9653);">BAIC0001</div>
<div class="btn" style="left:530px;top:644px">View JSON</div>
<div class="t cell" style="left:644.01px;top:646.00px;font-size:11.6px;transform-origin:0 0;transform:scaleX(0.9779);">Sat, 23 Aug 2025 13:16:12 GMT</div>
<div class="t nod" style="left:842.59px;top:646.00px;font-size:11.6px;transform-origin:0 0;transform:scaleX(0.9870);;font-style:italic">No data</div>
<div class="t cell" style="left:965.01px;top:646.00px;font-size:11.6px;transform-origin:0 0;transform:scaleX(0.9779);">Sat, 23 Aug 2025 13:16:32 GMT</div>
<div class="t cell" style="left:1162.14px;top:646.00px;font-size:11.6px;transform-origin:0 0;transform:scaleX(1.0154);">devices/BAIC0001/message</div>
<div class="t cell" style="left:237.39px;top:683.00px;font-size:11.6px;transform-origin:0 0;transform:scaleX(0.9435);">43</div>
<div class="t cell" style="left:282.69px;top:683.00px;font-size:11.6px;transform-origin:0 0;transform:scaleX(0.9541);">Bonrix AWS DQR-222</div>
<div class="t cell" style="left:418.68px;top:683.00px;font-size:11.6px;transform-origin:0 0;transform:scaleX(0.9653);">BAIC0001</div>
<div class="btn" style="left:530px;top:680px">View JSON</div>
<div class="t cell" style="left:644.01px;top:683.00px;font-size:11.6px;transform-origin:0 0;transform:scaleX(0.9779);">Sat, 23 Aug 2025 13:13:36 GMT</div>
<div class="t nod" style="left:842.59px;top:683.00px;font-size:11.6px;transform-origin:0 0;transform:scaleX(0.9870);;font-style:italic">No data</div>
<div class="t cell" style="left:965.01px;top:683.00px;font-size:11.6px;transform-origin:0 0;transform:scaleX(0.9779);">Sat, 23 Aug 2025 13:13:56 GMT</div>
<div class="t cell" style="left:1162.14px;top:683.00px;font-size:11.6px;transform-origin:0 0;transform:scaleX(1.0154);">devices/BAIC0001/message</div>
<div class="t cell" style="left:237.38px;top:719.00px;font-size:11.6px;transform-origin:0 0;transform:scaleX(0.9505);">42</div>
<div class="t cell" style="left:282.69px;top:719.00px;font-size:11.6px;transform-origin:0 0;transform:scaleX(0.9541);">Bonrix AWS DQR-222</div>
<div class="t cell" style="left:418.68px;top:719.00px;font-size:11.6px;transform-origin:0 0;transform:scaleX(0.9653);">BAIC0001</div>
<div class="btn" style="left:530px;top:717px">View JSON</div>
<div class="t cell" style="left:644.01px;top:719.00px;font-size:11.6px;transform-origin:0 0;transform:scaleX(0.9779);">Sat, 23 Aug 2025 13:12:59 GMT</div>
<div class="btn b2" style="left:842px;top:717px">View JSON</div>
<div class="t cell" style="left:965.01px;top:719.00px;font-size:11.6px;transform-origin:0 0;transform:scaleX(0.9779);">Sat, 23 Aug 2025 13:13:02 GMT</div>
<div class="t cell" style="left:1162.14px;top:719.00px;font-size:11.6px;transform-origin:0 0;transform:scaleX(1.0154);">devices/BAIC0001/message</div>
<div class="a" style="left:0px;top:738px;width:1366px;height:30px;background:linear-gradient(90deg,#222 0px,#242323 300px,#2a2725 470px,#37312b 600px,#3b352e 720px,#2c2a29 790px,#242323 950px,#1f1e1e 1366px)"></div>
<div class="a" style="left:0px;top:738px;width:36px;height:30px;background:#1b1d1a"></div>
<svg class="a" style="left:9px;top:744px;" width="18" height="18" viewBox="0 0 18 18"><path d="M0.7 2.6L6.8 1.7V8.4H0.7zM7.9 1.5L17.2 0.2V8.4H7.9zM0.7 9.5H6.8V16.3L0.7 15.4zM7.9 9.5H17.2V17.8L7.9 16.5z" fill="#fff"/></svg>
<div class="a" style="left:36px;top:738px;width:258px;height:30px;background:#2a2a2a;border-top:1px solid #6a6a6a;border-left:1px solid #6a6a6a;border-right:1px solid #5c5c5c"></div>
<svg class="a" style="left:46px;top:744px;" width="18" height="18" viewBox="0 0 18 18"><circle cx="12.1" cy="6.4" r="5" fill="none" stroke="#fff" stroke-width="1.1"/><path d="M8.6 9.9L2.6 16" stroke="#fff" stroke-width="1.2"/></svg>
<div class="t " style="left:75.39px;top:746.00px;font-size:15px;transform-origin:0 0;transform:scaleX(0.9491);color:#e0e0e0">Search</div>
<div class="a" style="left:37px;top:739px;width:256px;height:29px;overflow:hidden">
<svg class="a" style="left:180px;top:0px;" width="77" height="29" viewBox="0 0 77 29"><defs><radialGradient id="mg" cx=".35" cy=".25" r=".7"><stop offset="0" stop-color="#cdc8c2"/><stop offset=".6" stop-color="#99938d"/><stop offset="1" stop-color="#6c6661"/></radialGradient><linearGradient id="lg" x1="0" x2="1"><stop offset="0" stop-color="#f6d774"/><stop offset=".5" stop-color="#e9b54c"/><stop offset="1" stop-color="#e07a35"/></linearGradient></defs><circle cx="48" cy="64" r="50" fill="url(#mg)"/><circle cx="28.6" cy="13" r="1.1" fill="#eee"/><circle cx="38.5" cy="5.5" r=".9" fill="#eee"/><path d="M43 4.5l7-3.5 8.5 1 4 2.5 2 9-5 4H45l-3.5-4z" fill="url(#lg)"/><path d="M47.5 5.5h5.5v10.5h-5.5z" fill="#8796a0"/><path d="M42 14l-3.5 7.5M60 16l4.5 8.5M52 17l1.5 8" stroke="#e0ad3e" stroke-width="1.5"/><path d="M41 18.5l8.5 3 7.5-3-2-3h-12z" fill="#f4cf5a"/></svg>
</div>
<svg class="a" style="left:302px;top:744px;" width="20" height="18" viewBox="0 0 20 18"><g fill="none" stroke="#fff" stroke-width="1"><rect x="3.5" y="4.5" width="9" height="8"/><path d="M3 1.5h10M3 15.5h10M16.5 0.8v2.7M16.5 13.4v3"/></g><rect x="15.2" y="6.2" width="2.8" height="3" fill="#fff"/></svg>
<svg class="a" style="left:342px;top:744px;" width="18" height="18" viewBox="0 0 18 18"><defs><linearGradient id="eg1" x1="0" y1="1" x2="1" y2="0"><stop offset="0" stop-color="#0c59a4"/><stop offset="1" stop-color="#114a8b"/></linearGradient><linearGradient id="eg2" x1="0" y1="0" x2="1" y2="1"><stop offset="0" stop-color="#1b9de2"/><stop offset=".6" stop-color="#41c1a0"/><stop offset="1" stop-color="#6bd66b"/></linearGradient></defs><path d="M9 0.8a8.3 8.3 0 0 1 8.3 8.6c0 2.6-2 4-4.3 4-2.8 0-3.7-1.8-3.7-3.2 0-1.3 1-2.2 1-3.1S9 5.4 6.8 5.8C3.8 6.3 2 9 2.3 12 1.1 10.6.7 8.9.7 7.5A8.3 8.3 0 0 1 9 .8z" fill="url(#eg2)"/><path d="M2.3 12c-.3-3 1.5-5.7 4.5-6.2 2.2-.4 2.9 1.2 2.9 2.1s-1 1.8-1 3.1c0 2.4 3 4.6 6.5 3.4A8.3 8.3 0 0 1 .7 9.2c0 1 .6 2 1.6 2.8z" fill="#1a74d4"/></svg>
<svg class="a" style="left:379px;top:744px;" width="18" height="18" viewBox="0 0 18 18"><defs><linearGradient id="cp1" x1="0" y1="0" x2=".6" y2="1"><stop offset="0" stop-color="#1d9bf0"/><stop offset=".5" stop-color="#3cc8a0"/><stop offset="1" stop-color="#f5c03a"/></linearGradient><linearGradient id="cp2" x1=".4" y1="0" x2="1" y2="1"><stop offset="0" stop-color="#8b5cf6"/><stop offset=".5" stop-color="#e45cc0"/><stop offset="1" stop-color="#fb8a5a"/></linearGradient></defs><path d="M6 1.5h4.5q1.6 0 1.2 1.6L8.6 14.5Q8.1 16.5 6 16.5H2.6Q.9 16.5 1.4 14.8L4.2 3.2Q4.6 1.5 6 1.5z" fill="url(#cp1)"/><path d="M12 1.5h3.4q1.7 0 1.2 1.7l-2.8 11.6q-.4 1.7-1.8 1.7H7.5q-1.6 0-1.2-1.6L9.4 3.5Q9.9 1.5 12 1.5z" fill="url(#cp2)" opacity=".92"/></svg>
<svg class="a" style="left:416px;top:745px;" width="18" height="16" viewBox="0 0 18 16"><path d="M.5 2q0-1.5 1.5-1.5h4.5l2 2H16q1.5 0 1.5 1.5v9.5q0 1.5-1.5 1.5H2q-1.5 0-1.5-1.5z" fill="#f8c945"/><path d="M.5 5.5h17v8.5q0 1.5-1.5 1.5H2q-1.5 0-1.5-1.5z" fill="#ffd865"/><rect x="5.5" y="9.5" width="7" height="5.5" fill="#2a87d8"/><rect x="7.5" y="11.5" width="3" height="4" fill="#ffd865"/></svg>
<svg class="a" style="left:453px;top:744px;" width="18" height="18" viewBox="0 0 18 18"><rect x="1" y="1" width="12.5" height="10" fill="#d8dde3"/><rect x="2.3" y="2.3" width="10" height="7.3" fill="#1546b8"/><rect x="5.5" y="11" width="4" height="2" fill="#a9b0b8"/><circle cx="12.8" cy="12.8" r="4.6" fill="#d0d4d8"/><path d="M10.5 12.8l1.8-1.6M10.5 12.8l1.8 1.6M15 12.8l-1.8-1.6M15 12.8l-1.8 1.6" stroke="#2a8a2a" stroke-width="1.2"/></svg>
<div class="a" style="left:481px;top:738px;width:36px;height:30px;background:#57524f"></div>
<svg class="a" style="left:490px;top:745px;" width="18" height="17" viewBox="0 0 18 17"><circle cx="8.5" cy="8.5" r="8" fill="#db4437"/><path d="M8.5 8.5L1.6 4.5A8 8 0 0 0 4.5 15.4z" fill="#0f9d58"/><path d="M8.5 8.5h8A8 8 0 0 1 4.5 15.4z" fill="#ffcd40"/><circle cx="8.5" cy="8.5" r="3.8" fill="#fff"/><circle cx="8.5" cy="8.5" r="3" fill="#4285f4"/><circle cx="12.8" cy="12.8" r="4" fill="#1a73e8"/><text x="12.8" y="15" font-size="6" fill="#fff" text-anchor="middle" font-family="Liberation Sans">S</text></svg>
<svg class="a" style="left:529px;top:746px;" width="14" height="13" viewBox="0 0 14 13"><rect x=".3" y=".3" width="13" height="12.4" rx="2" fill="#050505"/><path d="M3.5 4l3.2-1.5L10 4v2.5l-1 .5V10H5V7l-1.5-.6z" fill="#ddd"/></svg>
<svg class="a" style="left:565px;top:745px;" width="17" height="17" viewBox="0 0 17 17"><rect x=".2" y=".2" width="16.3" height="16" fill="#ef443b"/><path d="M6.2 8.2l2.5-2.5 2.5 2.5-2.5 2.5zM9.2 5.2l1-1 4 4-4 4-1-1 3-3z" fill="#fff"/></svg>
<svg class="a" style="left:601px;top:745px;" width="18" height="17" viewBox="0 0 18 17"><circle cx="8.7" cy="8.5" r="8.1" fill="#e3673f"/><circle cx="8.7" cy="8.5" r="5.9" fill="#fbf2ee"/><path d="M10.8 5.2L7.4 8.5l3.4 3.3" fill="none" stroke="#e9a58c" stroke-width="1"/></svg>
<div class="a" style="left:411px;top:766px;width:28px;height:2px;background:#8d949b"></div>
<div class="a" style="left:448px;top:766px;width:28px;height:2px;background:#8d949b"></div>
<div class="a" style="left:481px;top:766px;width:36px;height:2px;background:#b4bac0"></div>
<div class="a" style="left:522px;top:766px;width:19px;height:2px;background:#8d949b"></div>
<div class="a" style="left:542px;top:766px;width:8px;height:2px;background:#5f6468"></div>
<div class="a" style="left:559px;top:766px;width:28px;height:2px;background:#8d949b"></div>
<div class="a" style="left:596px;top:766px;width:28px;height:2px;background:#8d949b"></div>
<svg class="a" style="left:946px;top:742px;" width="28" height="24" viewBox="0 0 28 24"><defs><linearGradient id="cl" x1="0" y1="0" x2="0" y2="1"><stop offset="0" stop-color="#cfe3fa"/><stop offset="1" stop-color="#8fb8ea"/></linearGradient></defs><path d="M4 17a4.5 4.5 0 0 1 1.2-8.8A6.8 6.8 0 0 1 18 7a4.5 4.5 0 0 1 7 5 4.6 4.6 0 0 1-3 5z" fill="url(#cl)"/><path d="M17.5 13.5l4.5 6.5a2.5 2.5 0 0 1-4.5 2z" fill="#2f7de0"/><circle cx="20" cy="5" r="5.5" fill="#d83b2e"/><text x="20" y="8.1" font-size="8.5" font-weight="bold" fill="#fff" text-anchor="middle" font-family="Liberation Sans">3</text></svg>
<div class="t " style="left:979.79px;top:746.00px;font-size:14px;transform-origin:0 0;transform:scaleX(0.9359);color:#fff">29°C</div>
<div class="t " style="left:1017.33px;top:746.00px;font-size:14px;transform-origin:0 0;transform:scaleX(1.0223);color:#fff">Light rain</div>
<svg class="a" style="left:1093px;top:746px;" width="16" height="12" viewBox="0 0 16 12"><path d="M2 9.5L8 3.5l6 6" fill="none" stroke="#fff" stroke-width="1.2"/></svg>
<svg class="a" style="left:1118px;top:744px;" width="15" height="17" viewBox="0 0 15 17"><path d="M3.5 1.6h6M3.5 15.4h6" stroke="#fff" stroke-width="1"/><path d="M2.5 4.5q-1.4 0-1.4 1.4v5q0 1.4 1.4 1.4h6q1.4 0 1.4-1.4v-5q0-1.4-1.4-1.4z" fill="none" stroke="#fff" stroke-width="1.1"/><path d="M10 7.5l3.5-2v6l-3.5-2" fill="none" stroke="#fff" stroke-width="1.1"/></svg>
<svg class="a" style="left:1140px;top:744px;" width="20" height="18" viewBox="0 0 20 18"><path d="M1.5 6h2.6l4.4-4v13l-4.4-4H1.5z" fill="none" stroke="#fff" stroke-width="1.1" stroke-linejoin="round"/><circle cx="12.8" cy="12.6" r="4" fill="#e23a3a"/><path d="M11.2 11l3.2 3.2M14.4 11l-3.2 3.2" stroke="#fff" stroke-width="1.1"/></svg>
<svg class="a" style="left:1167px;top:747px;" width="15" height="14" viewBox="0 0 15 14"><g fill="none" stroke="#fff" stroke-width="1.1"><path d="M1 12.5A11.5 11.5 0 0 1 12.5 1"/><path d="M4 12.5A8.5 8.5 0 0 1 12.5 4"/><path d="M7 12.5A5.5 5.5 0 0 1 12.5 7"/></g><circle cx="12" cy="12" r="1.6" fill="#fff"/></svg>
<svg class="a" style="left:1188px;top:745px;" width="25" height="15" viewBox="0 0 25 15"><rect x="1.2" y="1.2" width="22.6" height="12.4" rx="1" fill="none" stroke="#fff" stroke-width="1.2"/><path d="M4 4.5h17M4 7.3h17M7 10.3h11" stroke="#fff" stroke-width="1" stroke-dasharray="1.2 .9"/></svg>
<div class="t " style="left:1222.48px;top:747.00px;font-size:12.5px;transform-origin:0 0;transform:scaleX(0.8987);color:#fff">ENG</div>
<div class="t " style="left:1261.14px;top:747.00px;font-size:12.5px;transform-origin:0 0;transform:scaleX(0.9612);color:#fff">2:32 pm</div>
<svg class="a" style="left:1324px;top:744px;" width="18" height="17" viewBox="0 0 18 17"><path d="M1 1h16v12H11l-2 2.5L7 13H1z" fill="#fff"/><path d="M4 4.5h10M4 7h10M4 9.5h6" stroke="#262423" stroke-width="1"/></svg>
<div class="a" style="left:1361px;top:738px;width:1px;height:30px;background:#5b5957"></div>
</body></html>
